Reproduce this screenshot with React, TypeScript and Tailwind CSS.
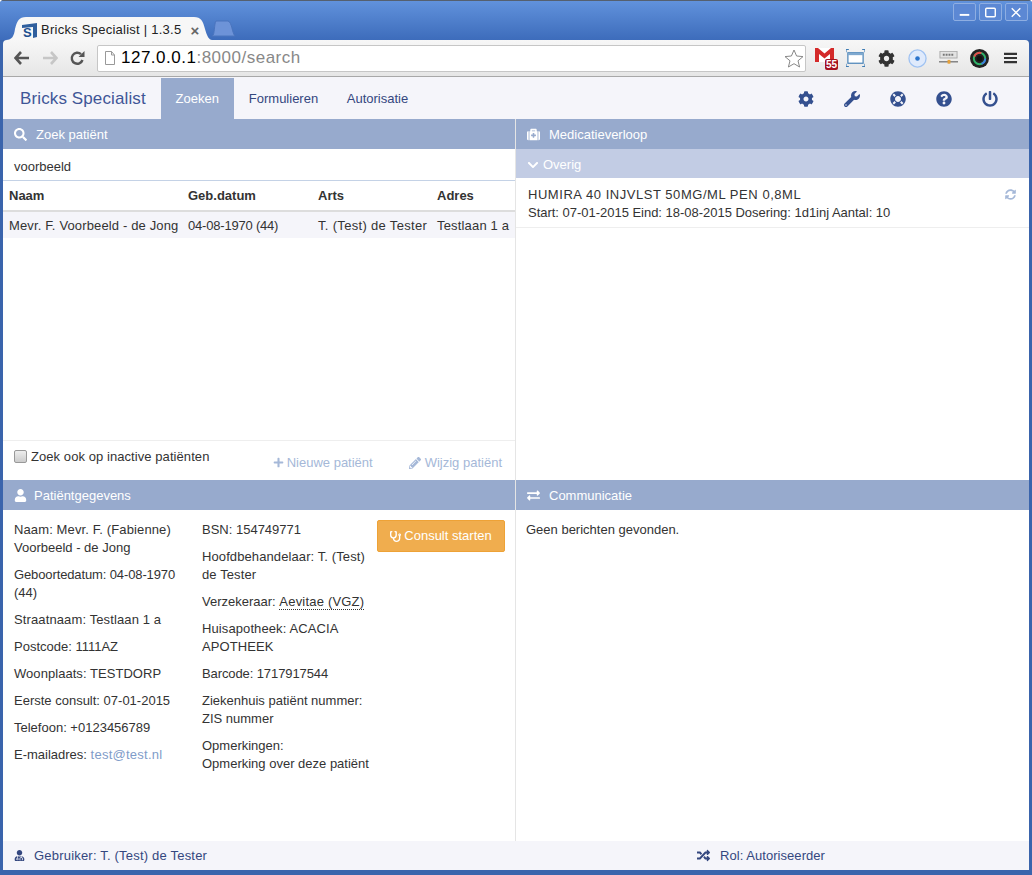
import type React from "react"
import {
  FaChevronDown,
  FaCog,
  FaExchangeAlt,
  FaLifeRing,
  FaMedkit,
  FaPencilAlt,
  FaPlus,
  FaPowerOff,
  FaQuestionCircle,
  FaRandom,
  FaSearch,
  FaStethoscope,
  FaSyncAlt,
  FaUser,
  FaUserMd,
  FaWrench,
} from "react-icons/fa"

function BrowserBar() {
  return (
    <div className="flex h-[77px] shrink-0 flex-col">
      <div className="relative flex h-10 items-end border-t border-[#55606f] bg-gradient-to-b from-[#6192dc] to-[#3d6cbb] pl-[6px]">
        <div className="relative flex h-[23px] w-[206px] items-center pl-[16px]">
          <svg className="absolute inset-0" width="206" height="23" viewBox="0 0 206 23">
            <path d="M0 23 C6 23 8 19 9 12 C11 4 13 0 20 0 L188 0 C195 0 197 4 199 12 C201 19 203 23 206 23 Z" fill="#f7f7f7" />
          </svg>
          <div className="relative mr-[4px] mt-[3px] h-[15px] w-[15px] shrink-0">
            <svg className="absolute inset-0" width="15" height="15" viewBox="0 0 15 15">
              <path d="M0 2 L15 0 L15 14 L11 15 L11 4 L0 5 Z" fill="#2f5f9e" />
            </svg>
            <span className="absolute bottom-0 left-[1px] text-[13px] font-bold leading-[11px] text-[#1d4f8f]">S</span>
          </div>
          <span className="relative mt-[3px] whitespace-nowrap text-[13px] tracking-[0.25px] text-[#222]">Bricks Specialist | 1.3.5</span>
          <span className="relative ml-[9px] mt-[3px] text-[15px] font-bold leading-none text-[#666]">×</span>
        </div>
        <svg className="mb-[3px] ml-[-1px]" width="25" height="17" viewBox="0 0 25 17">
          <path d="M1 16 C4 16 3 3 5 1 L17 1 C21 2 21 13 24 16 Z" fill="#6d93d8" stroke="#4a74bd" />
        </svg>
        <div className="absolute right-[4px] top-[2px] flex gap-[3px]">
          {[
            <rect key="min" x="6" y="9" width="10" height="2" fill="#fff" />,
            <rect key="max" x="6" y="3" width="10" height="9" rx="1" fill="none" stroke="#fff" strokeWidth="1.5" />,
            <path key="x" d="M6 3 L15 12 M15 3 L6 12" stroke="#fff" strokeWidth="1.5" />,
          ].map((shape, i) => (
            <div key={i} className="flex h-[18px] w-[23px] items-center justify-center rounded-[2px] border border-[#8eaee2] bg-[#5c88d4]">
              <svg width="22" height="15" viewBox="0 0 22 15">{shape}</svg>
            </div>
          ))}
        </div>
      </div>
      <div className="mx-[3px] flex h-[37px] items-center rounded-t-[4px] border-b border-[#a8a8a8] bg-gradient-to-b from-[#f7f7f7] to-[#e6e6e6] pl-[11px]">
        <svg width="16" height="14" viewBox="0 0 16 14" className="mr-[12px]">
          <path d="M7 1 L1.5 7 L7 13 M2 7 L15 7" fill="none" stroke="#555" strokeWidth="2.6" />
        </svg>
        <svg width="16" height="14" viewBox="0 0 16 14" className="mr-[12px]">
          <path d="M9 1 L14.5 7 L9 13 M14 7 L1 7" fill="none" stroke="#c6c6c6" strokeWidth="2.6" />
        </svg>
        <svg width="15" height="15" viewBox="0 0 15 15" className="mr-[12px]">
          <path d="M12.5 9 A5.5 5.5 0 1 1 11 3.2" fill="none" stroke="#555" strokeWidth="2.4" />
          <path d="M8.5 6 L14.5 6 L14.5 0 Z" fill="#555" />
        </svg>
        <div className="flex h-[27px] w-[709px] shrink-0 items-center rounded-[2px] border border-[#c6c6c6] bg-white pl-[6px] pr-px">
          <svg width="12" height="14" viewBox="0 0 12 14" className="mr-[5px]">
            <path d="M1.5 .5 L7.5 .5 L10.5 4 L10.5 13.5 L1.5 13.5 Z M7.5 .5 L7.5 4 L10.5 4" fill="#fff" stroke="#999" />
          </svg>
          <span className="flex-1 text-[17px] tracking-[0.5px] text-black">
            127.0.0.1<span className="text-[#888]">:8000/search</span>
          </span>
          <svg width="20" height="19" viewBox="0 0 20 19">
            <path d="M10 1 L12.6 7 L19 7.6 L14 11.8 L15.6 18 L10 14.7 L4.4 18 L6 11.8 L1 7.6 L7.4 7 Z" fill="#fff" stroke="#888" />
          </svg>
        </div>
        <div className="ml-[9px] flex items-center">
          <div className="relative h-[22px] w-[23px]">
            <svg width="19" height="14" viewBox="0 0 19 14" className="mt-[1px]">
              <rect width="19" height="14" fill="#fff" />
              <path d="M0 0 H3 L9.5 5.5 L16 0 H19 V14 H15 V6 L9.5 10.5 L4 6 V14 H0 Z" fill="#d42a2a" />
            </svg>
            <span className="absolute right-0 top-[12px] rounded-[2px] bg-[#a5121f] px-[1px] text-[10px] font-bold leading-[11px] text-white">55</span>
          </div>
          <svg width="19" height="18" viewBox="0 0 20 18" className="ml-[8px]">
            <rect x="2" y="3.5" width="16" height="11" fill="#fff" stroke="#3e7cb4" strokeWidth="1.2" />
            <rect x="2" y="3.5" width="16" height="2.5" fill="#7fa9cf" />
            <path d="M0 3 V0 H3 M17 0 H20 V3 M0 15 V18 H3 M17 18 H20 V15" fill="none" stroke="#3e7cb4" strokeWidth="1.2" />
          </svg>
          <FaCog className="ml-[13px] text-[17px] text-[#333]" />
          <svg width="19" height="19" viewBox="0 0 20 20" className="ml-[13px]">
            <circle cx="10" cy="10" r="9" fill="#dfeafc" stroke="#9fc2f2" strokeWidth="1.4" />
            <circle cx="10" cy="10" r="2.4" fill="#2b74cc" />
          </svg>
          <svg width="19" height="14" viewBox="0 0 20 14" className="ml-[12px]">
            <rect x="1" y="0" width="18" height="7" fill="#e3e3e3" stroke="#aaa" />
            <path d="M4 3.5 H16" stroke="#777" strokeWidth="2" strokeDasharray="2 1" />
            <path d="M0 11 H20" stroke="#777" strokeWidth="1.4" />
            <rect x="9" y="9" width="3" height="4" fill="#e6a13a" />
          </svg>
          <svg width="19" height="19" viewBox="0 0 20 20" className="ml-[12px]">
            <circle cx="10" cy="10" r="10" fill="#222" />
            <circle cx="10" cy="10" r="6" fill="none" stroke="#2fb36a" strokeWidth="2" />
            <path d="M4.5 8 A6 6 0 0 1 12 4.3" fill="none" stroke="#e64a4a" strokeWidth="2" />
            <path d="M12 15.7 A6 6 0 0 0 16 10" fill="none" stroke="#3f7fe0" strokeWidth="2" />
            <circle cx="10" cy="10" r="3" fill="#111" />
          </svg>
          <svg width="13" height="12" viewBox="0 0 14 12" className="ml-[15px]">
            <path d="M0 1.5 H14 M0 6 H14 M0 10.5 H14" stroke="#333" strokeWidth="2.4" />
          </svg>
        </div>
      </div>
    </div>
  )
}

function NavBar() {
  return (
    <div className="flex h-[42px] shrink-0 items-stretch bg-[#f5f5fa] pt-px">
      <span className="self-center pl-[17px] pr-[15px] text-[17px] leading-none tracking-[0.12px] text-[#3f5597]">Bricks Specialist</span>
      <span className="flex w-[73px] items-center justify-center bg-[#97aacd] text-[13px] text-white">Zoeken</span>
      <span className="flex w-[98px] items-center pl-[15px] text-[13px] text-[#34477f]">Formulieren</span>
      <span className="flex items-center pl-[15px] text-[13px] text-[#34477f]">Autorisatie</span>
      <div className="ml-auto flex items-center gap-[30px] pr-[31px] text-[16px] text-[#34508f]">
        <FaCog />
        <FaWrench />
        <FaLifeRing />
        <FaQuestionCircle />
        <FaPowerOff />
      </div>
    </div>
  )
}

function PanelHeader({ icon, title, iconWidth = "w-[22px]" }: { icon: React.ReactNode; title: string; iconWidth?: string }) {
  return (
    <div className="flex h-[30px] shrink-0 items-center bg-[#97aacd] pl-[11px] pt-px text-[13px] text-white">
      <span className={`flex items-center text-[13px] ${iconWidth}`}>{icon}</span>
      {title}
    </div>
  )
}

const detailsLeft = [
  { text: "Naam: Mevr. F. (Fabienne)", extra: "Voorbeeld - de Jong", track: "tracking-[0.12px]" },
  { text: "Geboortedatum: 04-08-1970", extra: "(44)", track: "tracking-[-0.12px]" },
  { text: "Straatnaam: Testlaan 1 a", track: "tracking-[0.12px]" },
  { text: "Postcode: 1111AZ" },
  { text: "Woonplaats: TESTDORP", track: "tracking-[0.05px]" },
  { text: "Eerste consult: 07-01-2015" },
  { text: "Telefoon: +0123456789" },
]

function SearchPanel() {
  return (
    <div className="flex h-[361px] flex-col border-r border-[#e5e5e5]">
      <PanelHeader icon={<FaSearch />} title="Zoek patiënt" />
      <div className="flex h-[32px] shrink-0 items-center border-b border-[#c4d2e6] pl-[11px] pt-[5px] text-[13px] text-[#333]">voorbeeld</div>
      <div className="grid h-[31px] shrink-0 grid-cols-[179px_130px_119px_1fr] items-center border-b-[2px] border-[#ddd] pl-[6px] text-[13px] font-bold text-[#333]">
        <span>Naam</span>
        <span>Geb.datum</span>
        <span>Arts</span>
        <span>Adres</span>
      </div>
      <div className="grid h-[26px] shrink-0 grid-cols-[179px_130px_119px_1fr] items-center whitespace-nowrap bg-[#f5f5fa] pl-[6px] pt-px text-[13px] text-[#333]">
        <span className="tracking-[0.14px]">Mevr. F. Voorbeeld - de Jong</span>
        <span className="tracking-[-0.2px]">04-08-1970 (44)</span>
        <span className="tracking-[0.32px]">T. (Test) de Tester</span>
        <span className="tracking-[0.17px]">Testlaan 1 a</span>
      </div>
      <div className="flex-1" />
      <div className="flex h-[40px] shrink-0 border-t border-[#eee] pl-[11px] text-[13px]">
        <label className="flex h-[31px] items-center gap-[4px] tracking-[0.07px] text-[#333]">
          <span className="h-[13px] w-[13px] rounded-[2px] border border-[#999] bg-gradient-to-b from-[#eee] to-[#ccc]" />
          Zoek ook op inactive patiënten
        </label>
        <div className="ml-auto flex items-center gap-[36px] pr-[13px] pt-[4px] text-[#a5b8d8]">
          <span className="flex items-center gap-[3px]"><FaPlus className="text-[11px]" />Nieuwe patiënt</span>
          <span className="flex items-center gap-[4px]"><FaPencilAlt className="text-[12px]" />Wijzig patiënt</span>
        </div>
      </div>
    </div>
  )
}

function MedicationPanel() {
  return (
    <div className="flex h-[361px] flex-col">
      <PanelHeader icon={<FaMedkit />} title="Medicatieverloop" />
      <div className="flex h-[29px] shrink-0 items-center gap-[4px] bg-[#c2cce4] pl-[11px] pt-[2px] text-[13px] text-white">
        <FaChevronDown className="text-[12px]" />
        Overig
      </div>
      <div className="relative flex h-[50px] shrink-0 flex-col justify-center border-b border-[#eee] pl-3 pt-[2px] text-[13px] leading-[18px] text-[#333]">
        <span className="tracking-[0.54px]">HUMIRA 40 INJVLST 50MG/ML PEN 0,8ML</span>
        <span className="tracking-[-0.02px]">Start: 07-01-2015 Eind: 18-08-2015 Dosering: 1d1inj Aantal: 10</span>
        <FaSyncAlt className="absolute right-[13px] top-[11px] text-[11px] text-[#a5b8d8]" />
      </div>
    </div>
  )
}

function PatientPanel() {
  return (
    <div className="flex h-[361px] flex-col border-r border-[#e5e5e5]">
      <PanelHeader icon={<FaUser />} title="Patiëntgegevens" iconWidth="w-[20px]" />
      <div className="flex flex-1 pl-[11px] pt-[10px] text-[13px] leading-[18px] text-[#333]">
        <div className="flex w-[188px] shrink-0 flex-col gap-[9px] pr-[15px] pt-px">
          {detailsLeft.map(({ text, extra, track }) => (
            <p key={text}>
              <span className={track}>{text}</span>
              {extra && <><br />{extra}</>}
            </p>
          ))}
          <p>E-mailadres: <span className="tracking-[0.25px] text-[#7f9cc9]">test@test.nl</span></p>
        </div>
        <div className="flex w-[175px] shrink-0 flex-col gap-[9px] pr-[3px] pt-px">
          <p>BSN: 154749771</p>
          <p className="tracking-[0.1px]">Hoofdbehandelaar: T. (Test) de Tester</p>
          <p>Verzekeraar: <span className="border-b border-dotted border-[#333] tracking-[0.2px]">Aevitae (VGZ)</span></p>
          <p className="tracking-[0.1px]">Huisapotheek: ACACIA APOTHEEK</p>
          <p className="tracking-[-0.1px]">Barcode: 1717917544</p>
          <p>Ziekenhuis patiënt nummer: ZIS nummer</p>
          <p className="whitespace-nowrap">Opmerkingen:<br />Opmerking over deze patiënt</p>
        </div>
        <div className="ml-auto pr-[10px]">
          <button className="flex h-[32px] w-[128px] items-center justify-center gap-[3px] rounded-[2px] border border-[#eea236] bg-[#f0ad4e] text-[13px] text-white">
            <FaStethoscope className="text-[11px]" />
            Consult starten
          </button>
        </div>
      </div>
    </div>
  )
}

export default function App() {
  return (
    <div className="flex h-[875px] w-[1032px] flex-col overflow-hidden rounded-t-[4px] bg-[#3a64ac] font-['Liberation_Sans',Arial,sans-serif]">
      <BrowserBar />
      <div className="mx-[3px] flex flex-1 flex-col bg-white">
        <NavBar />
        <div className="grid flex-1 grid-cols-[513px_1fr] grid-rows-[361px_361px]">
          <SearchPanel />
          <MedicationPanel />
          <PatientPanel />
          <div className="flex h-[361px] flex-col">
            <PanelHeader icon={<FaExchangeAlt />} title="Communicatie" />
            <p className="pl-[10px] pt-[11px] text-[13px] leading-[18px] text-[#333]">Geen berichten gevonden.</p>
          </div>
        </div>
        <div className="flex h-[29px] shrink-0 items-center bg-[#f5f5fa] pl-[11px] text-[13px] text-[#34477f]">
          <span className="flex w-[683px] items-center gap-[9px] tracking-[0.2px]"><FaUserMd className="text-[11px]" />Gebruiker: T. (Test) de Tester</span>
          <span className="flex items-center gap-[10px] tracking-[0.05px]"><FaRandom className="text-[13px]" />Rol: Autoriseerder</span>
        </div>
      </div>
      <div className="h-[5px] shrink-0" />
    </div>
  )
}
